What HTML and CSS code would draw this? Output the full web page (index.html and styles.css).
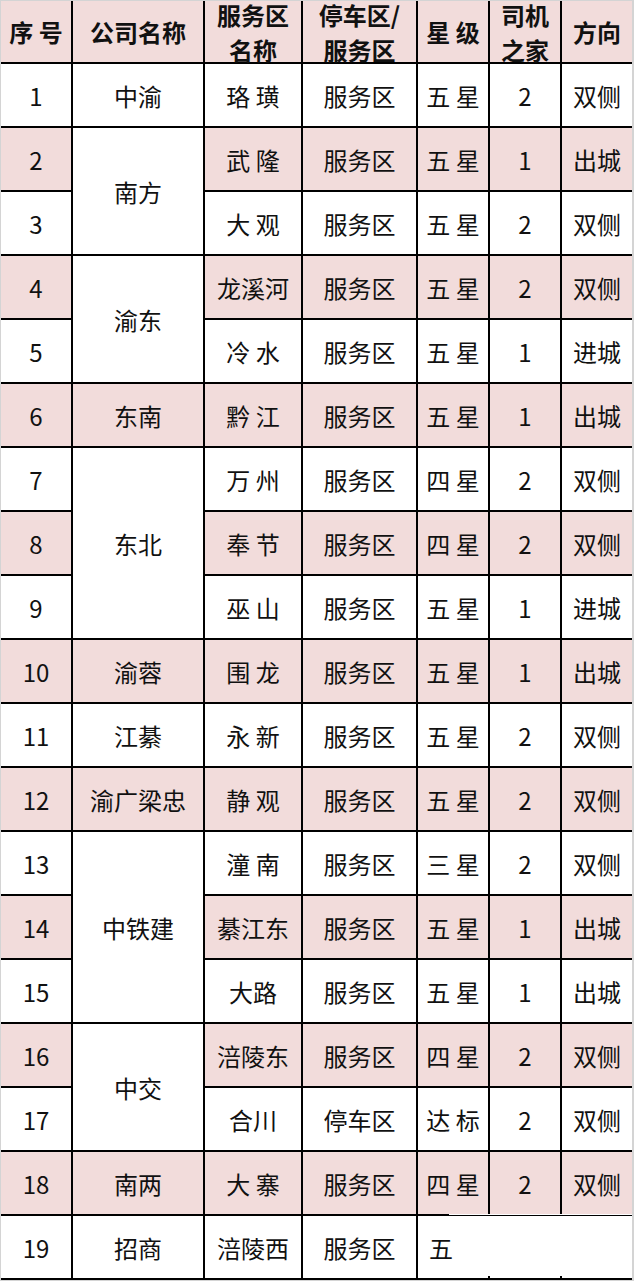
FILE: index.html
```html
<!DOCTYPE html>
<html lang="zh-CN">
<head>
<meta charset="utf-8">
<title>服务区星级表</title>
<link rel="stylesheet" href="styles.css">
</head>
<body>
<table class="grid">
  <thead>
    <tr class="pink">
      <th class="c1"><div class="hd">序 号</div></th>
      <th class="c2"><div class="hd">公司名称</div></th>
      <th class="c3"><div class="hd">服务区<br>名称</div></th>
      <th class="c4"><div class="hd">停车区/<br>服务区</div></th>
      <th class="c5"><div class="hd">星 级</div></th>
      <th class="c6"><div class="hd">司机<br>之家</div></th>
      <th class="c7 last"><div class="hd">方向</div></th>
    </tr>
  </thead>
  <tbody>
    <tr><td>1</td><td>中渝</td><td>珞 璜</td><td>服务区</td><td>五 星</td><td>2</td><td class="last">双侧</td></tr>
    <tr class="pink"><td>2</td><td rowspan="2" class="white">南方</td><td>武 隆</td><td>服务区</td><td>五 星</td><td>1</td><td class="last">出城</td></tr>
    <tr><td>3</td><td>大 观</td><td>服务区</td><td>五 星</td><td>2</td><td class="last">双侧</td></tr>
    <tr class="pink"><td>4</td><td rowspan="2" class="white">渝东</td><td>龙溪河</td><td>服务区</td><td>五 星</td><td>2</td><td class="last">双侧</td></tr>
    <tr><td>5</td><td>冷 水</td><td>服务区</td><td>五 星</td><td>1</td><td class="last">进城</td></tr>
    <tr class="pink"><td>6</td><td>东南</td><td>黔 江</td><td>服务区</td><td>五 星</td><td>1</td><td class="last">出城</td></tr>
    <tr><td>7</td><td rowspan="3" class="white">东北</td><td>万 州</td><td>服务区</td><td>四 星</td><td>2</td><td class="last">双侧</td></tr>
    <tr class="pink"><td>8</td><td>奉 节</td><td>服务区</td><td>四 星</td><td>2</td><td class="last">双侧</td></tr>
    <tr><td>9</td><td>巫 山</td><td>服务区</td><td>五 星</td><td>1</td><td class="last">进城</td></tr>
    <tr class="pink"><td>10</td><td>渝蓉</td><td>围 龙</td><td>服务区</td><td>五 星</td><td>1</td><td class="last">出城</td></tr>
    <tr><td>11</td><td>江綦</td><td>永 新</td><td>服务区</td><td>五 星</td><td>2</td><td class="last">双侧</td></tr>
    <tr class="pink"><td>12</td><td>渝广梁忠</td><td>静 观</td><td>服务区</td><td>五 星</td><td>2</td><td class="last">双侧</td></tr>
    <tr><td>13</td><td rowspan="3" class="white">中铁建</td><td>潼 南</td><td>服务区</td><td>三 星</td><td>2</td><td class="last">双侧</td></tr>
    <tr class="pink"><td>14</td><td>綦江东</td><td>服务区</td><td>五 星</td><td>1</td><td class="last">出城</td></tr>
    <tr><td>15</td><td>大路</td><td>服务区</td><td>五 星</td><td>1</td><td class="last">出城</td></tr>
    <tr class="pink"><td>16</td><td rowspan="2" class="white">中交</td><td>涪陵东</td><td>服务区</td><td>四 星</td><td>2</td><td class="last">双侧</td></tr>
    <tr><td>17</td><td>合川</td><td>停车区</td><td>达 标</td><td>2</td><td class="last">双侧</td></tr>
    <tr class="pink"><td>18</td><td>南两</td><td>大 寨</td><td>服务区</td><td>四 星</td><td>2</td><td class="last">双侧</td></tr>
    <tr><td>19</td><td>招商</td><td>涪陵西</td><td>服务区</td><td colspan="3" class="last partial">五</td></tr>
  </tbody>
</table>
</body>
</html>
```
FILE: styles.css
```css
html, body {
  margin: 0;
  padding: 0;
  background: #d4d4d4;
}

body {
  width: 634px;
  height: 1281px;
  overflow: hidden;
  padding: 1px 0 0 1px;
  box-sizing: border-box;
}

.grid {
  border-collapse: separate;
  border-spacing: 0;
  table-layout: fixed;
  width: 631px;
  background: #ffffff;
  font-family: "Noto Sans CJK SC", "Noto Sans", sans-serif;
  font-size: 24px;
  color: #111111;
}

.grid th,
.grid td {
  box-sizing: border-box;
  padding: 0;
  border-right: 2px solid #000000;
  border-bottom: 2px solid #000000;
  text-align: center;
  vertical-align: middle;
  white-space: nowrap;
  height: 64px;
  background: #ffffff;
}

.grid th {
  height: 63px;
  font-weight: 600;
}

.grid .last {
  border-right: none;
}

.grid .c1 { width: 72px; }
.grid .c2 { width: 132px; }
.grid .c3 { width: 98px; }
.grid .c4 { width: 115px; }
.grid .c5 { width: 72px; }
.grid .c6 { width: 72px; }
.grid .c7 { width: 70px; }

.grid tr.pink > th,
.grid tr.pink > td {
  background: #f2dcdb;
}

.grid tr.pink > td.white {
  background: #ffffff;
}

.hd {
  height: 61px;
  display: flex;
  align-items: center;
  justify-content: center;
  line-height: normal;
}

.grid td.partial {
  text-align: left;
  padding-left: 11px;
  position: relative;
}

.grid td.partial::before {
  content: "";
  position: absolute;
  top: -2px;
  left: 31px;
  right: 0;
  height: 1px;
  background: #ffffff;
}

.grid td.partial::after {
  content: "";
  position: absolute;
  bottom: -2px;
  left: 70px;
  width: 74px;
  height: 4px;
  border-left: 2px solid #000000;
  border-right: 2px solid #000000;
  box-sizing: border-box;
}
```
